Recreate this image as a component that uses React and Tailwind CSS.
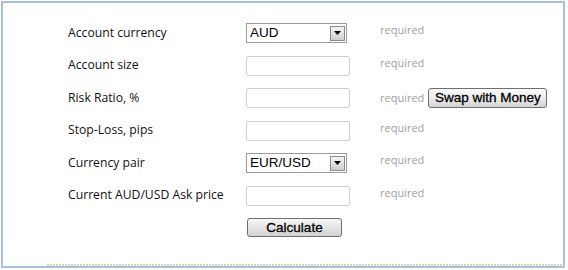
import React from 'react';

const labelFont = { fontFamily: '"Open Sans", "DejaVu Sans", sans-serif' };

function Select({ value }) {
  return (
    <div className="flex h-[20px] w-[101px] items-center justify-between border border-[#9c9c9c] bg-white pl-[3px] pr-[1px] text-[13.5px] text-black [font-family:'Liberation_Sans',Arial,sans-serif]">
      <span className="leading-none">{value}</span>
      <div className="flex h-[15px] w-[15px] items-center justify-center border border-[#8a8a8a] bg-gradient-to-b from-[#f6f6f6] to-[#cdcdcd]">
        <svg width="7" height="4" viewBox="0 0 7 4">
          <path d="M0 0 H7 L3.5 4 Z" fill="#000" />
        </svg>
      </div>
    </div>
  );
}

function TextBox() {
  return <div className="h-[20px] w-[104px] rounded-[2px] border border-[#cfcfcf] bg-white" />;
}

function Required() {
  return <span className="text-[11px] leading-[13px] text-[#a0a0a0]">required</span>;
}

const rows = [
  { label: 'Account currency', control: <Select value="AUD" /> },
  { label: 'Account size', control: <TextBox /> },
  { label: 'Risk Ratio, %', control: <TextBox />, swap: true },
  { label: 'Stop-Loss, pips', control: <TextBox /> },
  { label: 'Currency pair', control: <Select value="EUR/USD" /> },
  { label: 'Current AUD/USD Ask price', control: <TextBox /> },
];

export default function App() {
  return (
    <div className="h-[270px] w-[568px] bg-white pl-[1px] pt-[1px]" style={labelFont}>
      <div className="flex h-[267px] w-[564px] flex-col border-2 border-[#a9c1e1]">
        <div className="flex flex-1 flex-col gap-y-[12.5px] pl-[65px] pt-[20px]">
          {rows.map((r) => (
            <div key={r.label} className="flex h-[20px] items-start">
              <div className="flex h-[20px] w-[178px] items-center text-[12.2px] text-[#111]">{r.label}</div>
              <div className="w-[134px]">{r.control}</div>
              {r.swap ? (
                <div className="flex items-baseline gap-[4px]">
                  <Required />
                  <button className="h-[20px] w-[119px] rounded-[3px] border border-[#6f6f6f] bg-gradient-to-b from-[#fbfbfb] via-[#ececec] to-[#d4d4d4] text-[13.5px] leading-[18px] text-black [font-family:'Liberation_Sans',Arial,sans-serif] [-webkit-text-stroke:0.3px_#000]">
                    Swap with Money
                  </button>
                </div>
              ) : (
                <Required />
              )}
            </div>
          ))}
          <div className="flex h-[20px] items-start">
            <div className="w-[179px]" />
            <button className="h-[19px] w-[95px] rounded-[3px] border border-[#6f6f6f] bg-gradient-to-b from-[#f8f8f8] via-[#e4e4e4] to-[#d2d2d2] text-[13.5px] leading-[17px] text-black [font-family:'Liberation_Sans',Arial,sans-serif] [-webkit-text-stroke:0.3px_#000]">
              Calculate
            </button>
          </div>
        </div>
        <div className="ml-[44px] h-[2px] bg-[repeating-linear-gradient(90deg,#d8d8b4_0_2px,transparent_2px_3px)]" />
      </div>
    </div>
  );
}
